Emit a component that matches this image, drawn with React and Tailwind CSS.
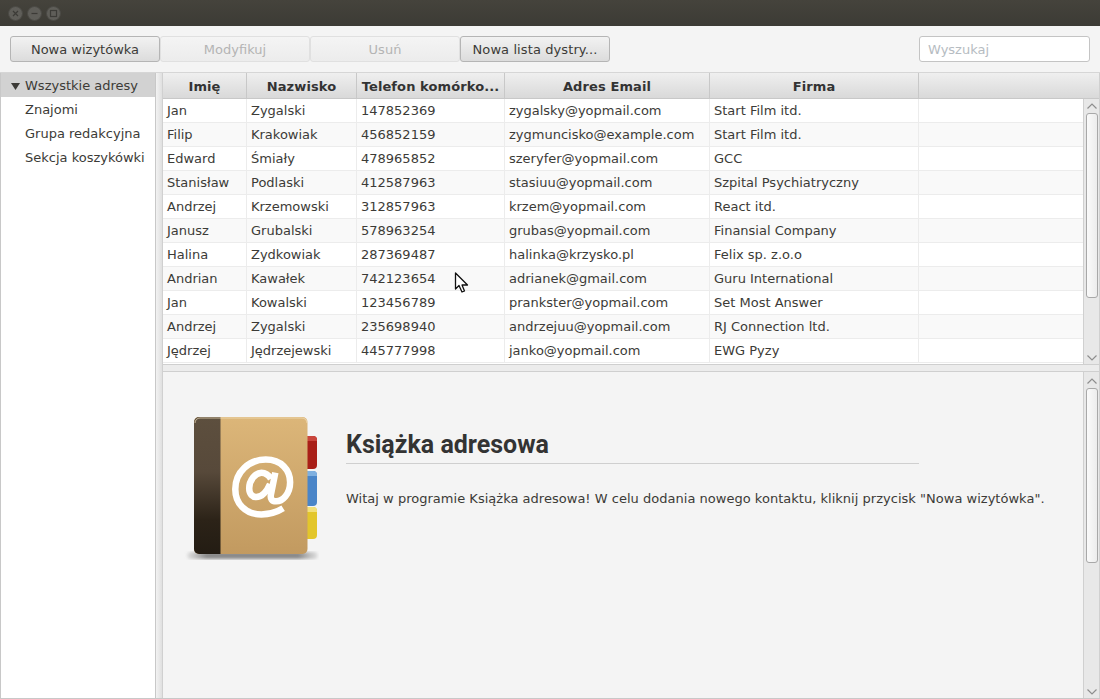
const rows = [
  ["Jan","Zygalski","147852369","zygalsky@yopmail.com","Start Film itd."],
  ["Filip","Krakowiak","456852159","zygmuncisko@example.com","Start Film itd."],
  ["Edward","Śmiały","478965852","szeryfer@yopmail.com","GCC"],
  ["Stanisław","Podlaski","412587963","stasiuu@yopmail.com","Szpital Psychiatryczny"],
  ["Andrzej","Krzemowski","312857963","krzem@yopmail.com","React itd."],
  ["Janusz","Grubalski","578963254","grubas@yopmail.com","Finansial Company"],
  ["Halina","Zydkowiak","287369487","halinka@krzysko.pl","Felix sp. z.o.o"],
  ["Andrian","Kawałek","742123654","adrianek@gmail.com","Guru International"],
  ["Jan","Kowalski","123456789","prankster@yopmail.com","Set Most Answer"],
  ["Andrzej","Zygalski","235698940","andrzejuu@yopmail.com","RJ Connection ltd."],
  ["Jędrzej","Jędrzejewski","445777998","janko@yopmail.com","EWG Pyzy"],
];
const widths = ["w-[84px]","w-[110px]","w-[148px]","w-[205px]","w-[209px]"];
const heads = ["Imię","Nazwisko","Telefon komórko...","Adres Email","Firma"];

function Btn({ children, disabled, className = "" }) {
  return (
    <div className={`w-[150px] h-[26px] pt-[1px] flex items-center justify-center rounded-[3px] border text-[13px] ${disabled ? "border-[#e0e0e0] text-[#b4b4b4] bg-gradient-to-b from-[#f4f4f4] to-[#ececec]" : "border-[#b5b5b5] text-[#3c3b37] bg-gradient-to-b from-[#f2f2f2] to-[#dcdcdc]"} ${className}`}>
      {children}
    </div>
  );
}

function WinBtn({ children }) {
  return (
    <div className="w-[15px] h-[15px] rounded-full bg-[#5f5e59] border border-[#4a4944] flex items-center justify-center">
      <svg width="9" height="9" viewBox="0 0 9 9" fill="none" stroke="#3c3b37" strokeWidth="1.2">{children}</svg>
    </div>
  );
}

function Scrollbar({ thumb, className = "" }) {
  return (
    <div className={`w-[16px] shrink-0 flex flex-col items-center bg-[#e8e8e8] border-l border-[#d0d0d0] ${className}`}>
      <div className="h-[14px] w-full shrink-0 flex items-center justify-center">
        <svg width="10" height="6" viewBox="0 0 10 6" fill="none" stroke="#8e8e8e" strokeWidth="1.2"><path d="M0.5 5.5 L5 1 L9.5 5.5" /></svg>
      </div>
      <div className={`w-[12px] shrink-0 rounded-[3px] border border-[#a8a8a8] bg-gradient-to-r from-[#fafafa] to-[#ececec] ${thumb}`} />
      <div className="flex-1" />
      <div className="h-[13px] w-full shrink-0 flex items-center justify-center">
        <svg width="10" height="6" viewBox="0 0 10 6" fill="none" stroke="#8e8e8e" strokeWidth="1.2"><path d="M0.5 0.5 L5 5 L9.5 0.5" /></svg>
      </div>
    </div>
  );
}

function BookIcon() {
  return (
    <svg width="136" height="146" viewBox="0 0 136 146" className="shrink-0">
      <defs>
        <linearGradient id="spine" x1="0" y1="0" x2="0" y2="1">
          <stop offset="0" stopColor="#5d4f3e" />
          <stop offset="0.4" stopColor="#57493a" />
          <stop offset="0.75" stopColor="#2c2318" />
          <stop offset="1" stopColor="#231c13" />
        </linearGradient>
        <linearGradient id="cover" x1="0" y1="0" x2="0" y2="1">
          <stop offset="0" stopColor="#dcb679" />
          <stop offset="1" stopColor="#c29a60" />
        </linearGradient>
        <linearGradient id="shadow" x1="0" y1="0" x2="1" y2="0">
          <stop offset="0" stopColor="#999" stopOpacity="0.2" />
          <stop offset="0.15" stopColor="#8a8a8a" />
          <stop offset="0.85" stopColor="#8a8a8a" />
          <stop offset="1" stopColor="#999" stopOpacity="0.2" />
        </linearGradient>
        <filter id="blur"><feGaussianBlur stdDeviation="1.6" /></filter>
      </defs>
      <rect x="4" y="136" width="131" height="7" rx="3.5" fill="url(#shadow)" filter="url(#blur)" />
      <path d="M124 20 h6 a4 4 0 0 1 4 4 v25 a4 4 0 0 1 -4 4 h-6z" fill="#a91f18" />
      <path d="M124 55 h6 a4 4 0 0 1 4 4 v27 a4 4 0 0 1 -4 4 h-6z" fill="#4a85c8" />
      <path d="M124 91 h6 a4 4 0 0 1 4 4 v24 a4 4 0 0 1 -4 4 h-6z" fill="#e3c62b" />
      <path d="M124 20 h6 a4 4 0 0 1 4 4 v1 h-10z" fill="#c9453c" />
      <path d="M124 55 h6 a4 4 0 0 1 4 4 v1 h-10z" fill="#7fb0e0" />
      <path d="M124 91 h6 a4 4 0 0 1 4 4 v1 h-10z" fill="#f2e07a" />
      <rect x="11" y="1" width="113.5" height="137" rx="5" fill="url(#cover)" />
      <path d="M16 1 H37.5 V138 H16 a5 5 0 0 1 -5 -5 V6 a5 5 0 0 1 5 -5z" fill="url(#spine)" />
      <path d="M12 7 a5 5 0 0 1 5 -5 H119 a5 5 0 0 1 5 5" fill="none" stroke="#f3e2bf" strokeOpacity="0.7" />
      <g fill="none" stroke="#fff" transform="translate(79.7 71) scale(0.87) translate(-76.5 -69.5)">
        <path d="M100 94 C92 99 84 101 75 101 C56 101 45 88 45 72 C45 52 61 38 80 38 C98 38 108 50 108 64 C108 78 99 86 92 86 C87 86 85 83 86 78 L91 53" strokeWidth="7.5" />
        <path d="M86 60 C83 55 79 53 75 53 C68 53 61 62 61 71 C61 78 65 81 69 81 C75 81 81 75 85 66" strokeWidth="7.5" />
      </g>
    </svg>
  );
}

export default function App() {
  return (
    <div className="w-[1100px] h-[699px] overflow-hidden relative flex flex-col bg-[#f4f4f4] text-[13px] text-[#3c3b37] font-['DejaVu_Sans',sans-serif]">
      <div className="h-[26px] shrink-0 bg-gradient-to-b from-[#45433c] to-[#3c3b35] flex items-center gap-[4px] pl-[8px]">
        <WinBtn><path d="M2 2 L7 7 M7 2 L2 7" /></WinBtn>
        <WinBtn><path d="M1.5 4.5 H7.5" /></WinBtn>
        <WinBtn><rect x="1.5" y="1.5" width="6" height="6" /></WinBtn>
      </div>
      <div className="h-[47px] shrink-0 flex items-center px-[10px] border-b border-[#d6d6d6]">
        <Btn>Nowa wizytówka</Btn>
        <Btn disabled>Modyfikuj</Btn>
        <Btn disabled>Usuń</Btn>
        <Btn className="tracking-[0.1px]">Nowa lista dystry...</Btn>
        <div className="flex-1" />
        <div className="w-[171px] h-[26px] pt-[1px] rounded-[3px] border border-[#c4c4c4] bg-white flex items-center pl-[8px] text-[#b6bcc2]">Wyszukaj</div>
      </div>
      <div className="flex-1 flex min-h-0 border-b border-[#c8c8c8]">
        <div className="w-[156px] shrink-0 bg-white border-x border-[#c8c8c8]">
          <div className="h-[24px] pt-[2px] bg-[#d2d2d2] flex items-center pl-[10px] gap-[5px]">
            <svg width="9" height="7" viewBox="0 0 9 7"><path d="M0 0 H9 L4.5 7z" fill="#3c3b37" /></svg>
            <span>Wszystkie adresy</span>
          </div>
          {["Znajomi","Grupa redakcyjna","Sekcja koszykówki"].map(t => (
            <div key={t} className="h-[24px] pt-[2px] flex items-center pl-[24px]">{t}</div>
          ))}
        </div>
        <div className="w-[7px] shrink-0 bg-gradient-to-r from-[#f2f2f2] to-[#e0e0e0] border-r border-[#d0d0d0]" />
        <div className="flex-1 flex flex-col min-w-0 border-r border-[#d0d0d0]">
          <div className="h-[291px] shrink-0 flex flex-col">
            <div className="h-[26px] shrink-0 flex bg-gradient-to-b from-[#efefef] to-[#d9d9d9] border-b border-[#c8c8c8]">
              {heads.map((h,i) => (
                <div key={h} className={`${widths[i]} shrink-0 pt-[2px] flex items-center justify-center font-bold tracking-[0.1px] border-r border-[#c8c8c8] text-[#333]`}>{h}</div>
              ))}
              <div className="flex-1" />
            </div>
            <div className="flex-1 flex min-h-0">
              <div className="flex-1 min-w-0 bg-white overflow-hidden">
                {rows.map((r,ri) => (
                  <div key={ri} className={`h-[24px] flex border-b border-[#ececec] ${ri % 2 ? "bg-[#f9f9f9]" : "bg-white"}`}>
                    {r.map((c,i) => (
                      <div key={i} className={`${widths[i]} shrink-0 flex items-center pl-[4px] border-r border-[#ececec] whitespace-nowrap`}>{c}</div>
                    ))}
                  </div>
                ))}
              </div>
              <Scrollbar thumb="h-[185px]" />
            </div>
          </div>
          <div className="h-[8px] shrink-0 bg-[#ececec] border-y border-[#cfcfcf]" />
          <div className="flex-1 flex min-h-0">
            <div className="flex-1 min-w-0 flex items-start pl-[20px] pt-[44px] gap-[27px] bg-[#f4f4f4]">
              <BookIcon />
              <div className="flex flex-col">
                <div className="w-[573px] h-[48px] pt-[10px] flex items-center border-b border-[#cfcfcf] font-['Roboto',sans-serif] font-bold text-[25px] text-[#333]">Książka adresowa</div>
                <div className="mt-[25px] whitespace-nowrap tracking-[0.02px]">Witaj w programie Książka adresowa! W celu dodania nowego kontaktu, kliknij przycisk "Nowa wizytówka".</div>
              </div>
            </div>
            <Scrollbar thumb="h-[175px]" className="pt-[2px]" />
          </div>
        </div>
      </div>
      <svg width="16" height="22" viewBox="0 0 16 22" className="absolute left-[454px] top-[272px]">
        <path d="M1.5 1 V17 L5 13.5 L8 20 L10.5 19 L8 13 H13.5 Z" fill="#fff" stroke="#111" strokeWidth="1.3" strokeLinejoin="round" />
      </svg>
    </div>
  );
}
